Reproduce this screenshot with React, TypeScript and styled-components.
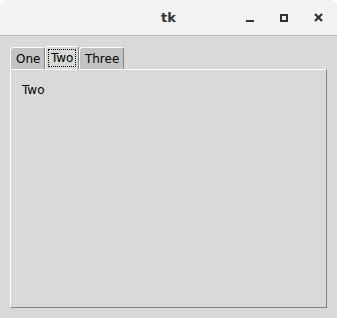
import * as React from 'react'
import styled, { createGlobalStyle } from 'styled-components'

const GlobalStyle = createGlobalStyle`
  html, body {
    margin: 0;
    padding: 0;
    background: #ffffff;
  }
  body {
    font-family: 'DejaVu Sans', sans-serif;
  }
`

const Window = styled.div`
  width: 337px;
  height: 318px;
  display: flex;
  flex-direction: column;
  background: #d9d9d9;
  border-radius: 8px 8px 0 0;
  overflow: hidden;
`

const TitleBar = styled.div`
  height: 36px;
  box-sizing: border-box;
  flex: none;
  display: grid;
  grid-template-columns: 1fr auto 1fr;
  align-items: center;
  background: #f3f3f3;
  border-bottom: 1px solid #b9b9b9;
`

const Title = styled.div`
  grid-column: 2;
  font-size: 13px;
  font-weight: bold;
  color: #2e3436;
  padding-bottom: 1px;
`

const Controls = styled.div`
  grid-column: 3;
  justify-self: end;
  display: flex;
  margin-right: 2px;
`

const Control = styled.div`
  width: 34px;
  height: 34px;
  display: flex;
  align-items: center;
  justify-content: center;

  svg {
    display: block;
  }
`

const Body = styled.div`
  flex: 1;
  display: flex;
  flex-direction: column;
  padding: 10px;
  min-height: 0;
`

const TabRow = styled.div`
  display: flex;
  align-items: flex-end;
  height: 23px;
  flex: none;
`

const Tab = styled.div<{ $selected?: boolean }>`
  box-sizing: border-box;
  height: ${p => (p.$selected ? '23px' : '22px')};
  padding: ${p => (p.$selected ? '0 3px' : '0 4px 0 5px')};
  display: flex;
  align-items: center;
  background: ${p => (p.$selected ? '#d9d9d9' : '#c3c3c3')};
  border: 1px solid;
  border-color: #ffffff #828282 transparent #ffffff;
  border-bottom: none;
  border-radius: 3px 3px 0 0;
  font-size: 12px;
  color: #000000;
  white-space: nowrap;
`

const FocusLabel = styled.span`
  outline: 1px dotted #000000;
  outline-offset: 0;
  padding: 1px 1.5px;
  line-height: 14px;
`

const Pane = styled.div`
  flex: 1;
  border: 1px solid;
  border-color: #ffffff #828282 #828282 #ffffff;
  padding: 13px 11px;
  font-size: 12px;
  color: #000000;
`

const Minimize = () => (
  <svg width="8" height="8" viewBox="0 0 8 8">
    <rect x="0" y="6" width="8" height="2" fill="#2e3436" />
  </svg>
)

const Maximize = () => (
  <svg width="8" height="8" viewBox="0 0 8 8">
    <rect x="1" y="1" width="6" height="6" fill="none" stroke="#2e3436" strokeWidth="2" />
  </svg>
)

const Close = () => (
  <svg width="9" height="9" viewBox="0 0 9 9">
    <path d="M1 1 L8 8 M8 1 L1 8" stroke="#2e3436" strokeWidth="2.2" />
  </svg>
)

export default function App() {
  return (
    <>
      <GlobalStyle />
      <Window>
        <TitleBar>
          <Title>tk</Title>
          <Controls>
            <Control><Minimize /></Control>
            <Control><Maximize /></Control>
            <Control><Close /></Control>
          </Controls>
        </TitleBar>
        <Body>
          <TabRow>
            <Tab>One</Tab>
            <Tab $selected><FocusLabel>Two</FocusLabel></Tab>
            <Tab>Three</Tab>
          </TabRow>
          <Pane>Two</Pane>
        </Body>
      </Window>
    </>
  )
}
